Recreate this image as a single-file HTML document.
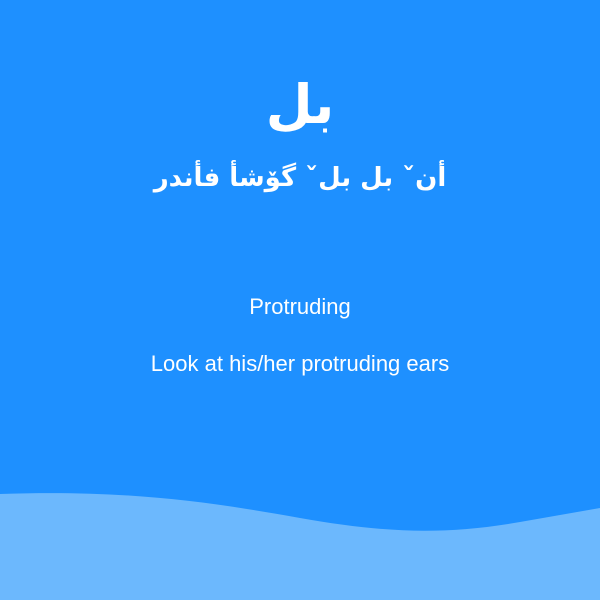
<!DOCTYPE html>
<html><head><meta charset="utf-8"><style>
html,body{margin:0;padding:0}
body{width:600px;height:600px;background:#1e90ff;position:relative;overflow:hidden;font-family:"Liberation Sans","DejaVu Sans",sans-serif;color:#fff}
.t{position:absolute;left:0;width:600px;text-align:center;white-space:nowrap}
#a{top:70px;font-size:54px;font-weight:bold;direction:rtl;line-height:70px;font-family:"DejaVu Sans",sans-serif}
#b{top:158px;font-size:26px;font-weight:bold;direction:rtl;line-height:40px;font-family:"DejaVu Sans",sans-serif}
#c{top:294px;font-size:22px;line-height:26px}
#d{top:351px;font-size:22px;line-height:26px}
svg{position:absolute;left:0;top:0}
</style></head><body>
<svg width="600" height="600"><path d="M0 494 C120 490 200 500 300 518 C380 532 440 536 520 522 L600 508 L600 600 L0 600 Z" fill="#6cb8fd"/></svg>
<div class="t" id="a">بل</div>
<div class="t" id="b">أنˇ بل بلˇ گۆشأ فأندر</div>
<div class="t" id="c">Protruding</div>
<div class="t" id="d">Look at his/her protruding ears</div>
</body></html>
